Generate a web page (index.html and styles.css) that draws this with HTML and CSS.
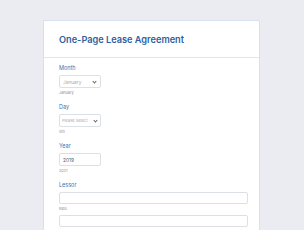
FILE: index.html
```html
<!DOCTYPE html>
<html lang="en">
<head>
<meta charset="UTF-8" />
<meta name="viewport" content="width=device-width, initial-scale=1" />
<title>One-Page Lease Agreement</title>
<link rel="stylesheet" href="styles.css">
</head>
<body>

<div class="form-card">
  <div class="form-header">
    <h1>One-Page Lease Agreement</h1>
  </div>

  <div class="form-body">
    <div class="field">
      <label>Month</label>
      <div class="select narrow"><span>January</span><i class="chev"></i></div>
      <div class="sub">January</div>
    </div>

    <div class="field">
      <label>Day</label>
      <div class="select narrow tight"><span class="small">Please Select</span><i class="chev"></i></div>
      <div class="sub">5th</div>
    </div>

    <div class="field">
      <label>Year</label>
      <div class="text-input narrow"><span class="val">2019</span></div>
      <div class="sub">2021</div>
    </div>

    <div class="field">
      <label>Lessor</label>
      <div class="text-input wide"></div>
      <div class="sub">Relo</div>
      <div class="text-input wide"></div>
    </div>
  </div>
</div>

</body>
</html>
```
FILE: styles.css
```css
body { margin: 0; background: #ebecf1; font-family: Inter, "Noto Sans", Arial, sans-serif; color: #333; }
.form-card {
  margin: 20px 0 0 43px; width: 215px; height: 240px;
  background: white; border: 1px solid #d6e0ef; border-radius: 2px;
}
.form-header { height: 36px; border-bottom: 1px solid #dfe6f2; display: flex; align-items: center; padding-left: 15px; }
.form-header h1 { margin: 0; font-size: 9.2px; font-weight: 600; color: #2f5f9f; letter-spacing: 0; }
.form-body { padding: 7px 12px 0 15px; }
.field { margin-bottom: 9px; }
.field label { display: block; font-size: 5.5px; font-weight: 400; color: #3c72ad; margin-bottom: 3px; line-height: 7px; }
.select, .text-input {
  box-sizing: border-box; height: 13px; border: 1px solid #dcdfe5; border-radius: 2px;
  display: flex; align-items: center; padding: 0 3px; font-size: 4.8px; color: #a8abb2; background: white;
  white-space: nowrap; overflow: hidden;
}
.narrow { width: 42px; }
.tight { padding: 0 2px; }
.wide { width: 189px; height: 12px; }
.select span { flex: 1; min-width: 0; }
.select .small { font-size: 4.1px; letter-spacing: -0.05px; }
.chev {
  flex: none; width: 2px; height: 2px; border-right: 0.7px solid #666; border-bottom: 0.7px solid #666;
  transform: rotate(45deg); margin: -1px 1px 0 1px;
}
.text-input .val { color: #555; }
.sub { font-size: 3.8px; color: #8a8d93; margin-top: 2px; line-height: 5px; margin-bottom: 4px; }
```
